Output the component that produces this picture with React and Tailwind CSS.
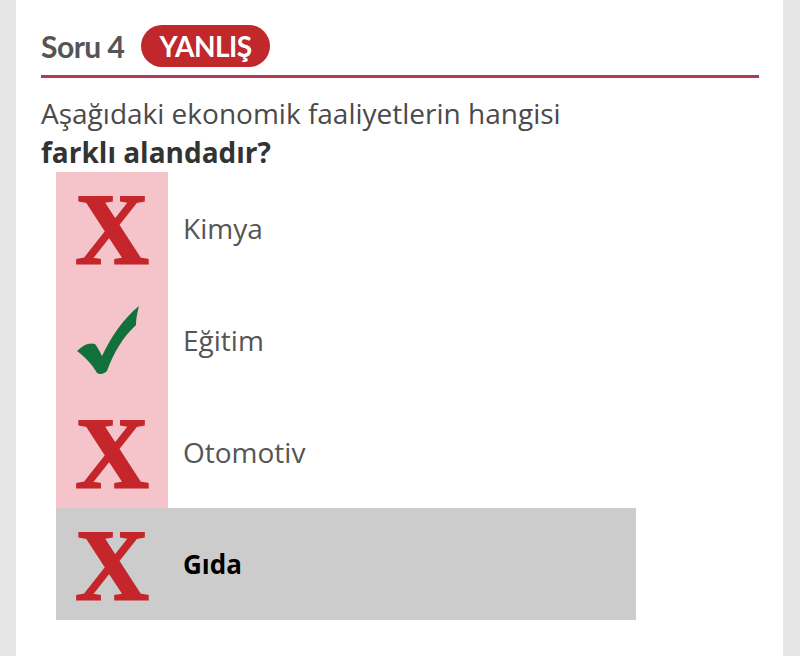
import React from "react";

function XMark() {
  return (
    <span
      className="block text-[102px] leading-none font-bold text-[#c4262b] select-none [-webkit-text-stroke:2px_#c4262b] mt-[4px]"
      style={{ fontFamily: '"Liberation Serif", "DejaVu Serif", serif' }}
    >
      X
    </span>
  );
}

function Check() {
  return (
    <svg width="64" height="70" viewBox="0 0 64 70" className="mr-[8px]">
      <path
        d="M1 46 C7 40 13 37 19 39 C22 43 24 47 26 51 C35 32 47 14 63 1 C61 9 60 14 60 20 C47 32 38 47 31 66 C28 69 24 70 21 68 C16 59 9 52 1 46 Z"
        fill="#12703a"
      />
    </svg>
  );
}

const options = [
  { label: "Kimya", icon: "x" },
  { label: "Eğitim", icon: "check" },
  { label: "Otomotiv", icon: "x" },
  { label: "Gıda", icon: "x", selected: true },
];

export default function App() {
  return (
    <div className="w-[800px] h-[656px] bg-[#e6e6e6] flex overflow-hidden">
      <div
        className="ml-[16px] w-[767px] h-full bg-white pl-[25px] pr-[24px] pt-[25px]"
        style={{ fontFamily: '"Open Sans", "Noto Sans", sans-serif' }}
      >
        <div className="flex items-center gap-[17px] h-[42px]">
          <span className="text-[30px] font-bold text-[#555] tracking-[-0.5px]" style={{ fontFamily: 'Lato, sans-serif' }}>Soru 4</span>
          <span className="h-[42px] px-[18px] rounded-full bg-[#c0282b] text-white text-[28px] font-bold flex items-center tracking-[-0.5px]" style={{ fontFamily: 'Lato, sans-serif' }}>
            YANLIŞ
          </span>
        </div>
        <div className="mt-[8px] h-[3px] bg-[#b23a52]" />
        <div className="mt-[16px] text-[28px] leading-[39px] text-[#4a4a4a]">
          <div>Aşağıdaki ekonomik faaliyetlerin hangisi</div>
          <div className="font-bold text-[#333]">farklı alandadır?</div>
        </div>
        <div className="ml-[15px] w-[580px]">
          {options.map((o) => (
            <div
              key={o.label}
              className={`flex items-stretch h-[112px] ${o.selected ? "bg-[#cccccc]" : ""}`}
            >
              <div className={`w-[112px] flex items-center justify-center ${o.selected ? "" : "bg-[#f5c4cb]"}`}>
                {o.icon === "x" ? <XMark /> : <Check />}
              </div>
              <div
                className={`pl-[15px] flex items-center ${o.selected ? "font-bold text-black text-[26px]" : "text-[#555] text-[28px]"}`}
              >
                {o.label}
              </div>
            </div>
          ))}
        </div>
      </div>
    </div>
  );
}
